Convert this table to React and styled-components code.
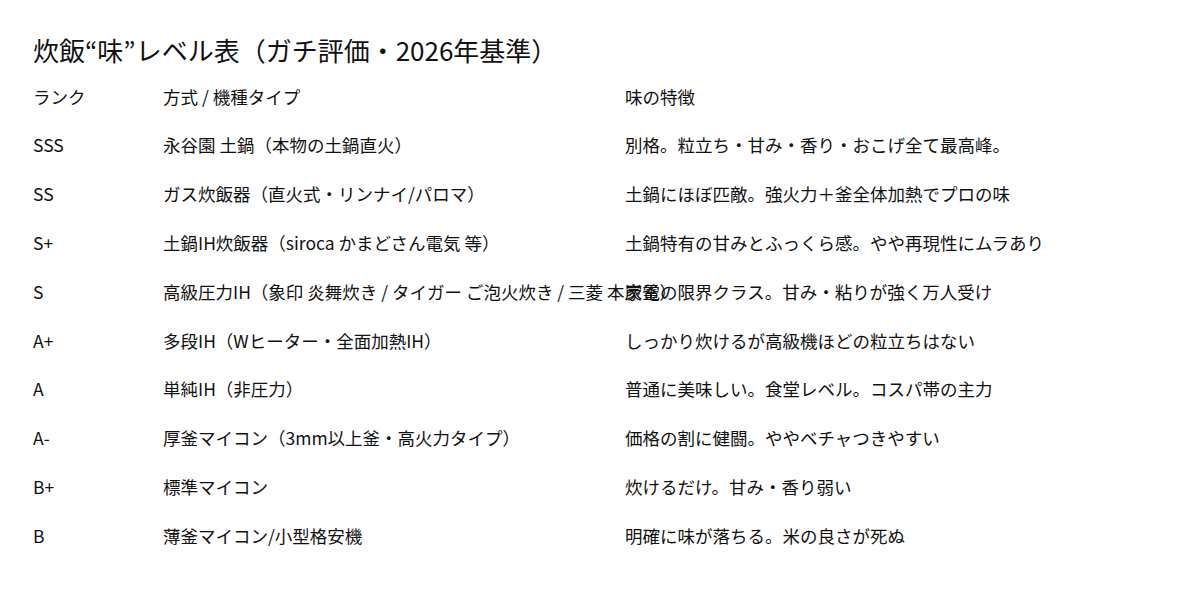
import { Fragment } from 'react'
import styled, { createGlobalStyle } from 'styled-components'

const GlobalStyle = createGlobalStyle`
  html, body {
    margin: 0;
    padding: 0;
    background: #ffffff;
  }
  body {
    font-family: "Noto Sans CJK JP", "Noto Sans", sans-serif;
    color: #111111;
  }
`

const ROWS = [
  { rank: 'SSS', type: '永谷園 土鍋（本物の土鍋直火）', taste: '別格。粒立ち・甘み・香り・おこげ全て最高峰。' },
  { rank: 'SS', type: 'ガス炊飯器（直火式・リンナイ/パロマ）', taste: '土鍋にほぼ匹敵。強火力＋釜全体加熱でプロの味' },
  { rank: 'S+', type: '土鍋IH炊飯器（siroca かまどさん電気 等）', taste: '土鍋特有の甘みとふっくら感。やや再現性にムラあり' },
  { rank: 'S', type: '高級圧力IH（象印 炎舞炊き / タイガー ご泡火炊き / 三菱 本炭釜）', taste: '家電の限界クラス。甘み・粘りが強く万人受け' },
  { rank: 'A+', type: '多段IH（Wヒーター・全面加熱IH）', taste: 'しっかり炊けるが高級機ほどの粒立ちはない' },
  { rank: 'A', type: '単純IH（非圧力）', taste: '普通に美味しい。食堂レベル。コスパ帯の主力' },
  { rank: 'A-', type: '厚釜マイコン（3mm以上釜・高火力タイプ）', taste: '価格の割に健闘。ややベチャつきやすい' },
  { rank: 'B+', type: '標準マイコン', taste: '炊けるだけ。甘み・香り弱い' },
  { rank: 'B', type: '薄釜マイコン/小型格安機', taste: '明確に味が落ちる。米の良さが死ぬ' },
]

// ─── Layout ───────────────────────────────────────────────────────────────────

const Page = styled.div`
  width: 1199px;
  height: 605px;
  box-sizing: border-box;
  padding: 33px 0 0 33px;
`

const Title = styled.h1`
  margin: 0;
  font-size: 26px;
  font-weight: 400;
  line-height: 34px;
`

const Table = styled.div`
  display: grid;
  grid-template-columns: 130px 462px 1fr;
  grid-auto-rows: 48.8px;
  margin-top: 5px;
`

// long cells are left to run on into the next column, as in the source table
const Cell = styled.div`
  display: flex;
  align-items: center;
  white-space: nowrap;
  font-size: 17.5px;
  line-height: 1;
  overflow: visible;
`

// ─── Component ────────────────────────────────────────────────────────────────

export default function App() {
  return (
    <Page>
      <GlobalStyle />
      <Title>炊飯“味”レベル表（ガチ評価・2026年基準）</Title>
      <Table>
        <Cell>ランク</Cell>
        <Cell>方式 / 機種タイプ</Cell>
        <Cell>味の特徴</Cell>
        {ROWS.map(r => (
          <Fragment key={r.rank}>
            <Cell>{r.rank}</Cell>
            <Cell>{r.type}</Cell>
            <Cell>{r.taste}</Cell>
          </Fragment>
        ))}
      </Table>
    </Page>
  )
}
